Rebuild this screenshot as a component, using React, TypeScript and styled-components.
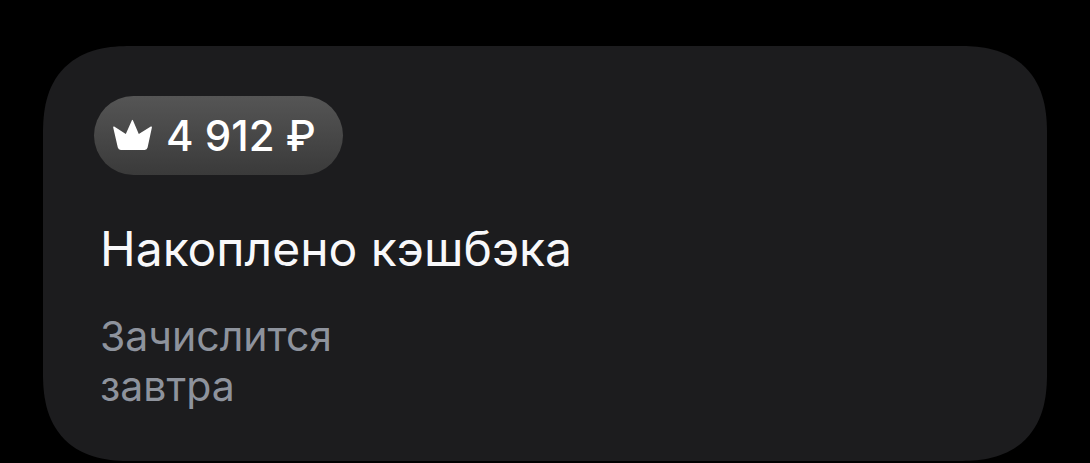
import React from "react";
import styled, { createGlobalStyle } from "styled-components";

const Global = createGlobalStyle`
  * { box-sizing: border-box; }
  body { margin: 0; background: #000; font-family: Inter, "Liberation Sans", sans-serif; }
`;

const Page = styled.main`
  padding: 46px 43px 0;
`;

const Card = styled.section`
  display: flex;
  flex-direction: column;
  align-items: flex-start;
  padding: 50px 51px;
  border-radius: 72px;
  background: #1c1c1e;

  @supports (corner-shape: superellipse(1.3)) {
    border-radius: 88px;
    corner-shape: superellipse(1.3);
  }
`;

const Badge = styled.div`
  display: flex;
  align-items: center;
  gap: 13px;
  height: 79px;
  padding: 0 27px 0 19px;
  border-radius: 40px;
  background: linear-gradient(#555, #3a3a3a);
  color: #fff;
  font-size: 42px;
  line-height: 48px;
  font-weight: 550;
  white-space: nowrap;
`;

const Crown = styled.svg`
  width: 40px;
  height: 34px;
  flex: none;
`;

const Title = styled.h1`
  margin: 44px 0 0;
  padding-left: 6px;
  color: #f8f8fa;
  font-size: 48px;
  line-height: 60px;
  font-weight: 400;
`;

const Note = styled.p`
  margin: 32px 0 0;
  padding-left: 6px;
  color: #8e939d;
  font-size: 41px;
  line-height: 50px;
`;

export default function App() {
  return (
    <Page>
      <Global />
      <Card>
        <Badge>
          <Crown viewBox="0 0 40 34" aria-hidden="true">
            <path
              fill="#fff"
              d="M18.9 1.2 Q19.4 0.2 19.9 1.2 L25.8 15 L37.8 7.6 Q39.2 7.2 38.9 8.5 L34.6 28.6 Q34 31 31.8 31 H7.8 Q5.4 31 4.8 28.6 L0.2 8.5 Q0 7.2 1.2 7.6 L12.8 15 Z"
            />
          </Crown>
          <span>4 912 ₽</span>
        </Badge>
        <Title>Накоплено кэшбэка</Title>
        <Note>
          Зачислится
          <br />
          завтра
        </Note>
      </Card>
    </Page>
  );
}
